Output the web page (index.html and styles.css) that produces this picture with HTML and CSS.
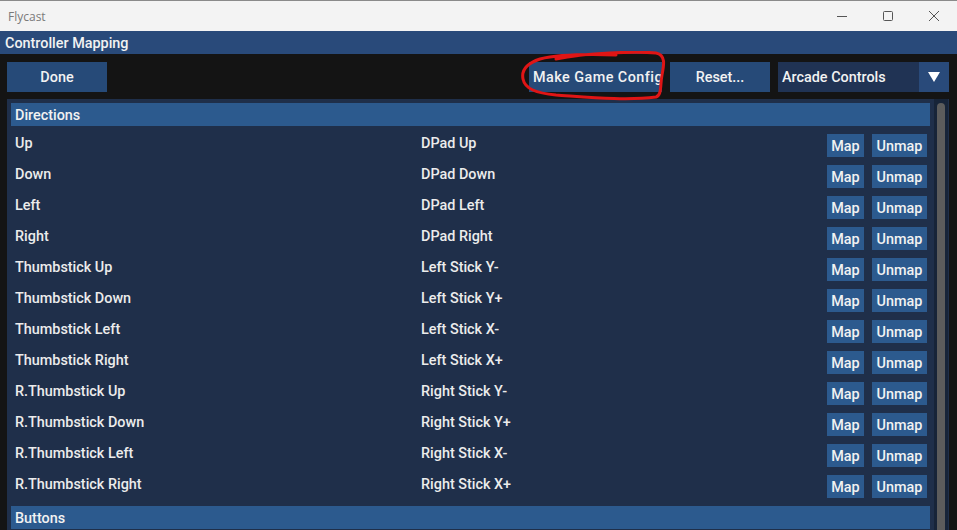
FILE: index.html
```html
<!DOCTYPE html>
<html>
<head>
<meta charset="utf-8">
<link rel="stylesheet" href="styles.css">
</head>
<body>
<div class="window">
  <div class="titlebar">
    <span class="app-title">Flycast</span>
    <div class="win-controls">
      <span class="wc"><svg width="12" height="12" viewBox="0 0 12 12"><path d="M1 6.5h10" stroke="#555" stroke-width="1"/></svg></span>
      <span class="wc"><svg width="12" height="12" viewBox="0 0 12 12"><rect x="1.5" y="1.5" width="9" height="9" rx="1" fill="none" stroke="#555" stroke-width="1"/></svg></span>
      <span class="wc"><svg width="12" height="12" viewBox="0 0 12 12"><path d="M1 1L11 11M11 1L1 11" stroke="#555" stroke-width="1"/></svg></span>
    </div>
  </div>
  <div class="header">Controller Mapping</div>
  <div class="main">
    <div class="toolbar">
      <button class="btn btn-done">Done</button>
      <div class="toolbar-right">
        <button class="btn btn-config"><span>Make Game Config</span></button>
        <button class="btn btn-reset">Reset...</button>
        <div class="combo">
          <span class="combo-text">Arcade Controls</span>
          <span class="combo-arrow"><svg width="14" height="12" viewBox="0 0 14 12"><path d="M1 1h12L7 11z" fill="#fff"/></svg></span>
        </div>
      </div>
      <svg class="annotation" width="160" height="56" viewBox="0 0 160 56"><path d="M40 8 C70 2, 120 0, 140 2 C150 4, 148 14, 146 24 C144 34, 146 44, 140 46 C110 50, 70 46, 40 44 C20 42, 9 38, 7 28 C5 18, 12 12, 24 8 C40 4, 70 3, 100 4" fill="none" stroke="#e01515" stroke-width="3" stroke-linecap="round"/></svg>
    </div>
    <div class="panel">
      <div class="panel-content">
        <div class="section">Directions</div>
        <div class="row"><span class="c1">Up</span><span class="c2">DPad Up</span><span class="acts"><button class="sbtn map">Map</button><button class="sbtn unmap">Unmap</button></span></div>
        <div class="row"><span class="c1">Down</span><span class="c2">DPad Down</span><span class="acts"><button class="sbtn map">Map</button><button class="sbtn unmap">Unmap</button></span></div>
        <div class="row"><span class="c1">Left</span><span class="c2">DPad Left</span><span class="acts"><button class="sbtn map">Map</button><button class="sbtn unmap">Unmap</button></span></div>
        <div class="row"><span class="c1">Right</span><span class="c2">DPad Right</span><span class="acts"><button class="sbtn map">Map</button><button class="sbtn unmap">Unmap</button></span></div>
        <div class="row"><span class="c1">Thumbstick Up</span><span class="c2">Left Stick Y-</span><span class="acts"><button class="sbtn map">Map</button><button class="sbtn unmap">Unmap</button></span></div>
        <div class="row"><span class="c1">Thumbstick Down</span><span class="c2">Left Stick Y+</span><span class="acts"><button class="sbtn map">Map</button><button class="sbtn unmap">Unmap</button></span></div>
        <div class="row"><span class="c1">Thumbstick Left</span><span class="c2">Left Stick X-</span><span class="acts"><button class="sbtn map">Map</button><button class="sbtn unmap">Unmap</button></span></div>
        <div class="row"><span class="c1">Thumbstick Right</span><span class="c2">Left Stick X+</span><span class="acts"><button class="sbtn map">Map</button><button class="sbtn unmap">Unmap</button></span></div>
        <div class="row"><span class="c1">R.Thumbstick Up</span><span class="c2">Right Stick Y-</span><span class="acts"><button class="sbtn map">Map</button><button class="sbtn unmap">Unmap</button></span></div>
        <div class="row"><span class="c1">R.Thumbstick Down</span><span class="c2">Right Stick Y+</span><span class="acts"><button class="sbtn map">Map</button><button class="sbtn unmap">Unmap</button></span></div>
        <div class="row"><span class="c1">R.Thumbstick Left</span><span class="c2">Right Stick X-</span><span class="acts"><button class="sbtn map">Map</button><button class="sbtn unmap">Unmap</button></span></div>
        <div class="row"><span class="c1">R.Thumbstick Right</span><span class="c2">Right Stick X+</span><span class="acts"><button class="sbtn map">Map</button><button class="sbtn unmap">Unmap</button></span></div>
        <div class="section">Buttons</div>
      </div>
      <div class="scrollbar"><div class="thumb"></div></div>
    </div>
  </div>
</div>
</body>
</html>
```
FILE: styles.css
```css
* { box-sizing: border-box; }
html, body { margin: 0; padding: 0; height: 100%; overflow: hidden; }
body { background: #141414; font-family: Roboto, "Noto Sans", sans-serif; }

.window { display: flex; flex-direction: column; height: 530px; }

.titlebar {
  height: 31px;
  flex: none;
  background: #f3f3f3;
  border-top: 1px solid #8a8a8a;
  display: flex;
  align-items: center;
  justify-content: space-between;
}
.app-title {
  font-family: "Open Sans", "Noto Sans", sans-serif;
  font-size: 12px;
  color: #7a7a7a;
  padding-left: 8px;
}
.win-controls { display: flex; height: 100%; }
.wc {
  width: 46px;
  display: flex;
  align-items: center;
  justify-content: center;
}

.header {
  height: 23px;
  flex: none;
  background: #294a7a;
  color: #f2f2f2;
  font-weight: 500;
  font-size: 14.4px;
  line-height: 25px;
  padding-left: 5px;
}

.main {
  flex: 1;
  display: flex;
  flex-direction: column;
  padding: 8px 8px 0 7px;
  gap: 7px;
  min-height: 0;
}

.toolbar {
  display: flex;
  justify-content: space-between;
  height: 30px;
  flex: none;
  position: relative;
}
.toolbar-right { display: flex; gap: 8px; }

.btn {
  border: 0;
  margin: 0;
  height: 30px;
  background: #264a78;
  color: #f2f2f2;
  font-family: Roboto, "Noto Sans", sans-serif;
  font-weight: 500;
  font-size: 14.4px;
  padding: 1px 0 0;
  cursor: default;
}
.btn-done { width: 100px; }
.btn-reset { width: 100px; }
.btn-config {
  width: 133px;
  overflow: hidden;
  white-space: nowrap;
  text-align: left;
  padding-left: 4px;
  letter-spacing: 0.45px;
}

.combo { display: flex; height: 30px; width: 171px; }
.combo-text {
  flex: 1;
  background: #203354;
  color: #f2f2f2;
  font-weight: 500;
  font-size: 14.4px;
  line-height: 32px;
  padding-left: 4px;
}
.combo-arrow {
  width: 30px;
  background: #294a7a;
  display: flex;
  align-items: center;
  justify-content: center;
}

.annotation {
  position: absolute;
  left: 509px;
  top: -11px;
  pointer-events: none;
}

.panel {
  flex: 1;
  min-height: 0;
  background: #1f2f4a;
  display: flex;
  padding: 4px 0 0 4px;
  overflow: hidden;
}
.panel-content {
  width: 919px;
  display: flex;
  flex-direction: column;
  gap: 8px;
}
.section {
  height: 23px;
  flex: none;
  background: #2c5a8e;
  color: #f2f2f2;
  font-weight: 500;
  font-size: 14.4px;
  line-height: 25px;
  padding-left: 4px;
}
.row {
  height: 23px;
  flex: none;
  display: grid;
  grid-template-columns: 410px 1fr auto;
  align-items: start;
  color: #ececec;
  font-weight: 500;
  font-size: 14.4px;
}
.c1, .c2 { line-height: 20px; }
.c1 { padding-left: 4px; }
.acts { display: flex; gap: 8px; padding-right: 3px; }
.sbtn {
  border: 0;
  margin: 0;
  height: 23px;
  padding: 1px 0 0;
  text-align: center;
  background: #2c5a8e;
  color: #f2f2f2;
  font-family: Roboto, "Noto Sans", sans-serif;
  font-weight: 500;
  font-size: 14.4px;
}
.map { width: 37px; }
.unmap { width: 55px; }

.scrollbar {
  width: 14px;
  margin-left: 4px;
  margin-top: -4px;
  background: #172438;
  padding: 4px 3px 0 3px;
}
.thumb {
  height: 100%;
  background: #5c5c5c;
  border-radius: 4px 4px 0 0;
}
```
